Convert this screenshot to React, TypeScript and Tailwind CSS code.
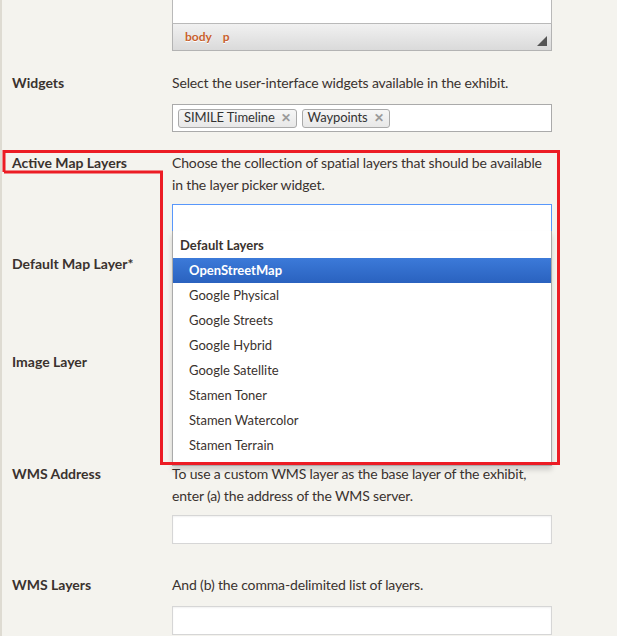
import React from "react";

const font = { fontFamily: "Lato, 'Open Sans', sans-serif" };

function Label({ children }: { children: React.ReactNode }) {
  return (
    <div className="w-[170px] shrink-0 pl-[10px] text-[14px] leading-[22px] font-bold text-[#3a322e]">
      {children}
    </div>
  );
}

function TextInput() {
  return (
    <div className="h-[29px] w-[380px] border border-[#d6d6d6] bg-white shadow-[inset_0_1px_2px_rgba(0,0,0,0.06)]" />
  );
}

function Chip({ text }: { text: string }) {
  return (
    <div className="flex h-[19px] items-center gap-[6px] rounded-[3px] border border-[#aaaaaa] bg-gradient-to-b from-[#f6f6f6] to-[#e8e8e8] pl-[5px] pr-[5px] text-[13px] tracking-[-0.1px] text-[#333]">
      <span>{text}</span>
      <span className="text-[12px] font-bold leading-none text-[#9a9a9a]">✕</span>
    </div>
  );
}

const items = [
  "Google Physical",
  "Google Streets",
  "Google Hybrid",
  "Google Satellite",
  "Stamen Toner",
  "Stamen Watercolor",
  "Stamen Terrain",
];

const desc = "text-[14px] leading-[22px] tracking-[-0.15px]";

export default function App() {
  return (
    <div
      className="relative h-[636px] w-[617px] overflow-hidden border-l-2 border-[#dedbd2] bg-[#f4f3ee] text-[#3a322e]"
      style={font}
    >
      {/* editor box */}
      <div className="ml-[170px] w-[380px]">
        <div className="h-[24px] border-x border-b border-[#b9b9b9] bg-white" />
        <div className="relative flex h-[27px] items-center border-x border-b border-[#b3b3b3] bg-gradient-to-b from-[#f1f1f1] to-[#dadada] pl-[12px] text-[12px] font-bold text-[#c8602c] [text-shadow:0_1px_0_#fff]">
          <span>body</span>
          <span className="ml-[11px]">p</span>
          <svg className="absolute right-[4px] bottom-[4px]" width="10" height="10" viewBox="0 0 10 10">
            <polygon points="10,0 10,10 0,10" fill="#555" />
          </svg>
        </div>
      </div>

      {/* Widgets */}
      <div className="mt-[21px] flex">
        <Label>Widgets</Label>
        <div className="flex w-[380px] flex-col">
          <div className={desc}>Select the user-interface widgets available in the exhibit.</div>
          <div className="mt-[10px] flex h-[28px] items-center gap-[5px] border border-[#aaaaaa] bg-white pl-[5px]">
            <Chip text="SIMILE Timeline" />
            <Chip text="Waypoints" />
          </div>
        </div>
      </div>

      {/* Active Map Layers */}
      <div className="mt-[20px] flex">
        <Label>Active Map Layers</Label>
        <div className="flex w-[380px] flex-col">
          <div className={desc}>
            Choose the collection of spatial layers that should be available
            <br />
            in the layer picker widget.
          </div>
          <div className="relative mt-[8px]">
            <div className="h-[28px] border border-[#5897fb] bg-white" />
            <div className="absolute left-0 top-[27px] z-10 w-[380px] border border-t-0 border-[#aaaaaa] bg-white pb-[7px] shadow-[0_4px_5px_rgba(0,0,0,0.15)]">
              <div className="flex h-[27px] items-center pl-[7px] pt-[2px] text-[13px] font-bold">Default Layers</div>
              <div className="flex h-[25px] items-center bg-gradient-to-b from-[#3c7ad9] to-[#2a62bf] pl-[16px] text-[13px] font-bold text-white">
                OpenStreetMap
              </div>
              {items.map((t) => (
                <div key={t} className="flex h-[25px] items-center pl-[16px] text-[13px]">
                  {t}
                </div>
              ))}
            </div>
          </div>
        </div>
      </div>

      {/* Default Map Layer */}
      <div className="mt-[21px] flex h-[77px]">
        <Label>Default Map Layer*</Label>
      </div>

      {/* Image Layer */}
      <div className="mt-[21px] flex h-[91px]">
        <Label>Image Layer</Label>
      </div>

      {/* WMS Address */}
      <div className="mt-[21px] flex">
        <Label>WMS Address</Label>
        <div className="flex w-[380px] flex-col">
          <div className={desc}>
            To use a custom WMS layer as the base layer of the exhibit,
            <br />
            enter (a) the address of the WMS server.
          </div>
          <div className="mt-[8px]">
            <TextInput />
          </div>
        </div>
      </div>

      {/* WMS Layers */}
      <div className="mt-[30px] flex">
        <Label>WMS Layers</Label>
        <div className="flex w-[380px] flex-col">
          <div className={desc}>And (b) the comma-delimited list of layers.</div>
          <div className="mt-[10px]">
            <TextInput />
          </div>
        </div>
      </div>

      {/* red annotation */}
      <svg className="pointer-events-none absolute left-0 top-0 z-20" width="617" height="636">
        <polyline
          points="2,172 2,151.5 556.5,151.5 556.5,463.5 159.5,463.5 159.5,172 2,172"
          fill="none"
          stroke="#ec1c24"
          strokeWidth="3"
        />
      </svg>
    </div>
  );
}
